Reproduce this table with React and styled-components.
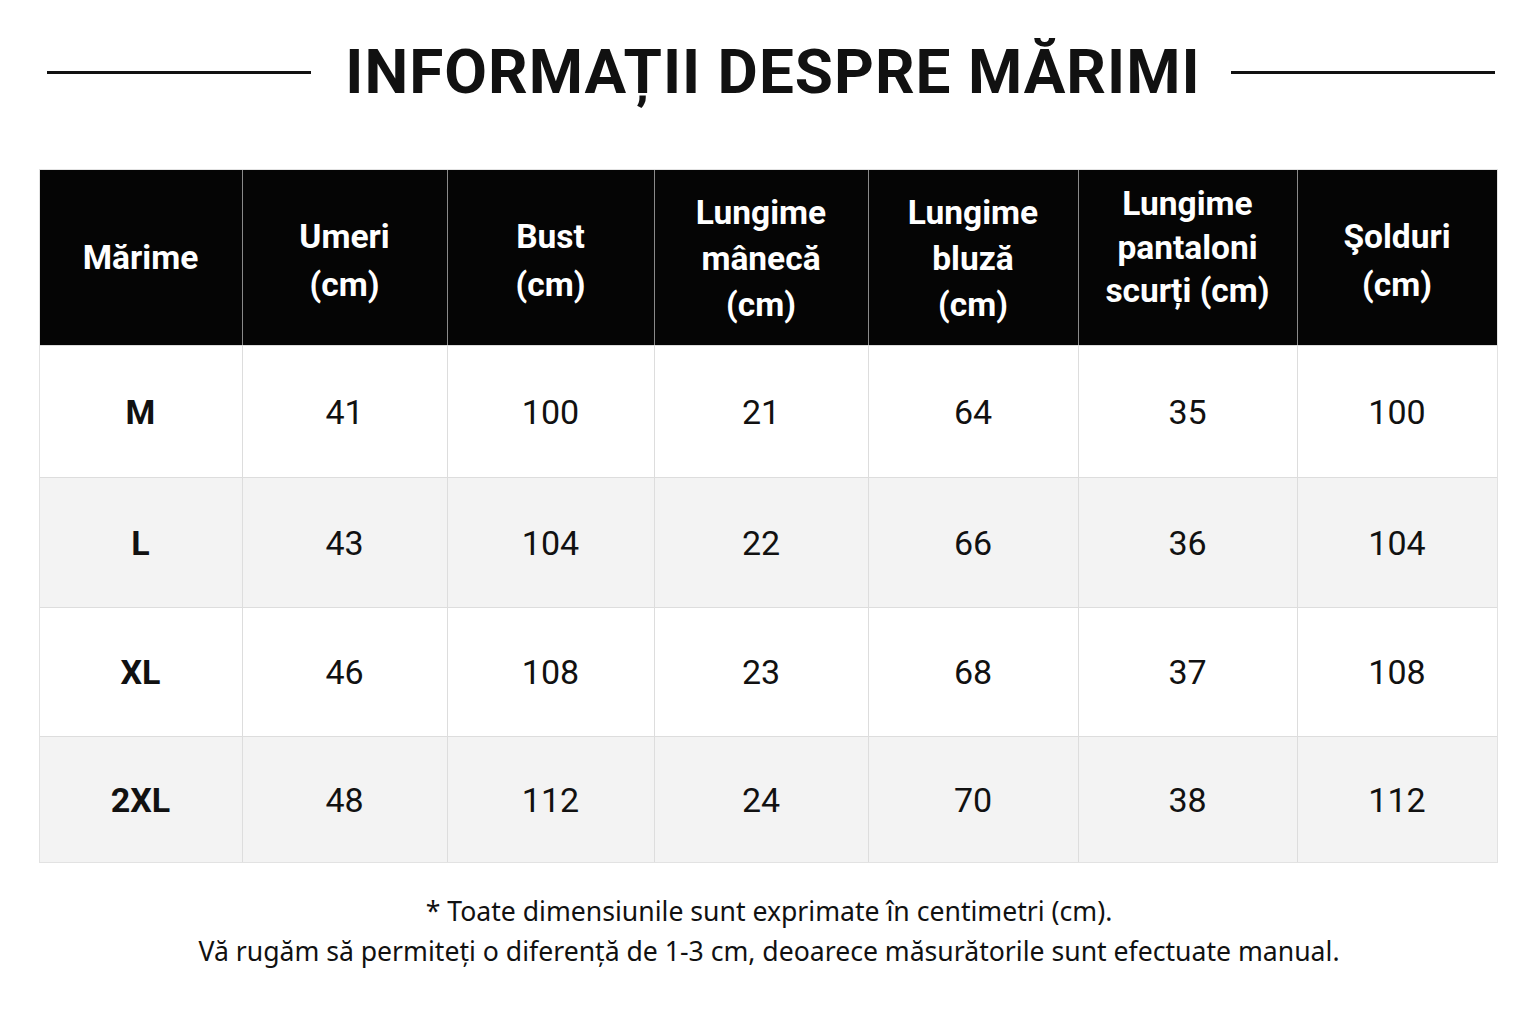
import React from "react";
import styled, { createGlobalStyle } from "styled-components";

const Global = createGlobalStyle`
  html, body { margin: 0; padding: 0; background: #ffffff; }
  body { font-family: Roboto, "Noto Sans", sans-serif; color: #111; }
`;

const Page = styled.div`
  width: 1536px;
  height: 1024px;
  box-sizing: border-box;
  padding-top: 36px;
  display: flex;
  flex-direction: column;
  align-items: center;
`;

const TitleRow = styled.div`
  width: 1448px;
  margin-left: 6px;
  display: flex;
  align-items: center;
  gap: 30px;
`;

const Rule = styled.div`
  flex: 1;
  height: 3px;
  background: #111;
`;

const Title = styled.h1`
  margin: 0 0 0 4px;
  font-family: Roboto, sans-serif;
  font-weight: 700;
  font-size: 62px;
  line-height: 72px;
  letter-spacing: 1px;
  color: #111;
  white-space: nowrap;
`;

const Table = styled.div`
  margin-top: 61px;
  display: grid;
  grid-template-columns: 202px 205px 207px 214px 210px 219px 200px;
  grid-template-rows: 175px 132px 130px 129px 126px;
  border: 1px solid #e2e2e2;
  box-sizing: border-box;
`;

const HeadCell = styled.div`
  background: #050505;
  color: #fff;
  display: flex;
  align-items: center;
  justify-content: center;
  text-align: center;
  box-sizing: border-box;
  padding-top: ${(p) => (p.$shift > 0 ? p.$shift : 0)}px;
  padding-bottom: ${(p) => (p.$shift < 0 ? -p.$shift : 0)}px;
  font-family: Roboto, sans-serif;
  font-weight: 700;
  font-size: 33.5px;
  line-height: ${(p) => p.$lh || 46}px;
  border-left: ${(p) => (p.$first ? "none" : "1px solid #8a8a8a")};
`;

const Cell = styled.div`
  background: ${(p) => (p.$alt ? "#f3f3f3" : "#ffffff")};
  display: flex;
  align-items: center;
  justify-content: center;
  font-family: Roboto, sans-serif;
  font-weight: ${(p) => (p.$bold ? 700 : 400)};
  font-size: 34px;
  color: #111;
  border-left: ${(p) => (p.$first ? "none" : "1px solid #dddddd")};
  border-top: 1px solid #dddddd;
  box-sizing: border-box;
`;

const Notes = styled.div`
  margin-top: 28px;
  margin-left: 2px;
  text-align: center;
  font-family: "Noto Sans", "Noto Sans CJK SC", sans-serif;
  font-size: 26.6px;
  line-height: 40px;
  color: #111;
`;

const headers = [
  { lines: ["Mărime"] },
  { lines: ["Umeri", "(cm)"], lh: 48, shift: 6 },
  { lines: ["Bust", "(cm)"], lh: 48, shift: 6 },
  { lines: ["Lungime", "mânecă", "(cm)"], shift: 2 },
  { lines: ["Lungime", "bluză", "(cm)"], shift: 2 },
  { lines: ["Lungime", "pantaloni", "scurți (cm)"], lh: 43.5, shift: -20 },
  { lines: ["Şolduri", "(cm)"], lh: 48, shift: 6 },
];

const rows = [
  ["M", "41", "100", "21", "64", "35", "100"],
  ["L", "43", "104", "22", "66", "36", "104"],
  ["XL", "46", "108", "23", "68", "37", "108"],
  ["2XL", "48", "112", "24", "70", "38", "112"],
];

export default function App() {
  return (
    <>
      <Global />
      <Page>
        <TitleRow>
          <Rule />
          <Title>INFORMAȚII DESPRE MĂRIMI</Title>
          <Rule />
        </TitleRow>
        <Table>
          {headers.map((h, i) => (
            <HeadCell key={i} $first={i === 0} $lh={h.lh} $shift={h.shift || 0}>
              <div>
                {h.lines.map((line, j) => (
                  <div key={j}>{line}</div>
                ))}
              </div>
            </HeadCell>
          ))}
          {rows.map((r, ri) =>
            r.map((v, ci) => (
              <Cell key={ri + "-" + ci} $alt={ri % 2 === 1} $bold={ci === 0} $first={ci === 0}>
                {v}
              </Cell>
            ))
          )}
        </Table>
        <Notes>
          <div>* Toate dimensiunile sunt exprimate în centimetri (cm).</div>
          <div>Vă rugăm să permiteți o diferență de 1-3 cm, deoarece măsurătorile sunt efectuate manual.</div>
        </Notes>
      </Page>
    </>
  );
}
